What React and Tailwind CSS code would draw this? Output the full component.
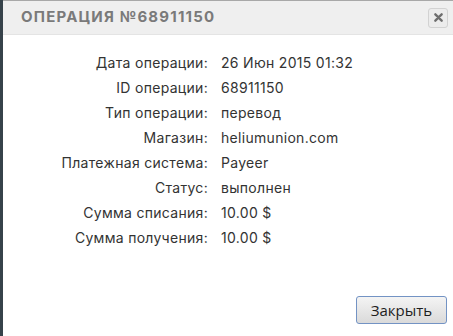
const rows = [
  ['Дата операции:', '26 Июн 2015 01:32'],
  ['ID операции:', '68911150'],
  ['Тип операции:', 'перевод'],
  ['Магазин:', 'heliumunion.com'],
  ['Платежная система:', 'Payeer'],
  ['Статус:', 'выполнен'],
  ['Сумма списания:', '10.00 $'],
  ['Сумма получения:', '10.00 $'],
];

export default function App() {
  return (
    <div className="flex h-[336px] w-[453px] bg-white" style={{ fontFamily: 'Inter, "Noto Sans", sans-serif' }}>
      <div className="w-[3px] shrink-0 bg-[#36424a]" />
      <div className="flex flex-1 flex-col border-t border-[#a8a8a8]">
        <div className="flex h-[34px] items-center justify-between border-b border-[#e4e4e4] bg-[#efefef] pl-[18px] pr-[5px]">
          <h1 className="text-[15px] font-bold uppercase tracking-[1.2px] text-[#7a7a7a]">Операция №68911150</h1>
          <button className="flex h-[20px] w-[20px] items-center justify-center rounded-[3px] border border-[#d2d2d2] bg-[#ececec]">
            <svg width="9" height="9" viewBox="0 0 10 10">
              <path d="M1.5 1.5 L8.5 8.5 M8.5 1.5 L1.5 8.5" stroke="#6e6e6e" strokeWidth="2.6" strokeLinecap="round" />
            </svg>
          </button>
        </div>
        <div className="grid grid-cols-[205px_1fr] gap-x-[13px] gap-y-[5px] pt-[18px] text-[14px] leading-[20px] tracking-[0.3px] text-[#333]">
          {rows.map(([label, value]) => (
            <div key={label} className="contents">
              <div className="text-right">{label}</div>
              <div>{value}</div>
            </div>
          ))}
        </div>
        <div className="mt-auto flex justify-end pb-[12px] pr-[6px]">
          <button
            className="h-[28px] w-[91px] rounded-[3px] border border-[#7393c4] bg-gradient-to-b from-[#f4f4f4] to-[#dadada] text-[15px] text-[#1e1e1e]"
            style={{ fontFamily: '"Open Sans", "Liberation Sans", sans-serif' }}
          >
            Закрыть
          </button>
        </div>
      </div>
    </div>
  );
}
